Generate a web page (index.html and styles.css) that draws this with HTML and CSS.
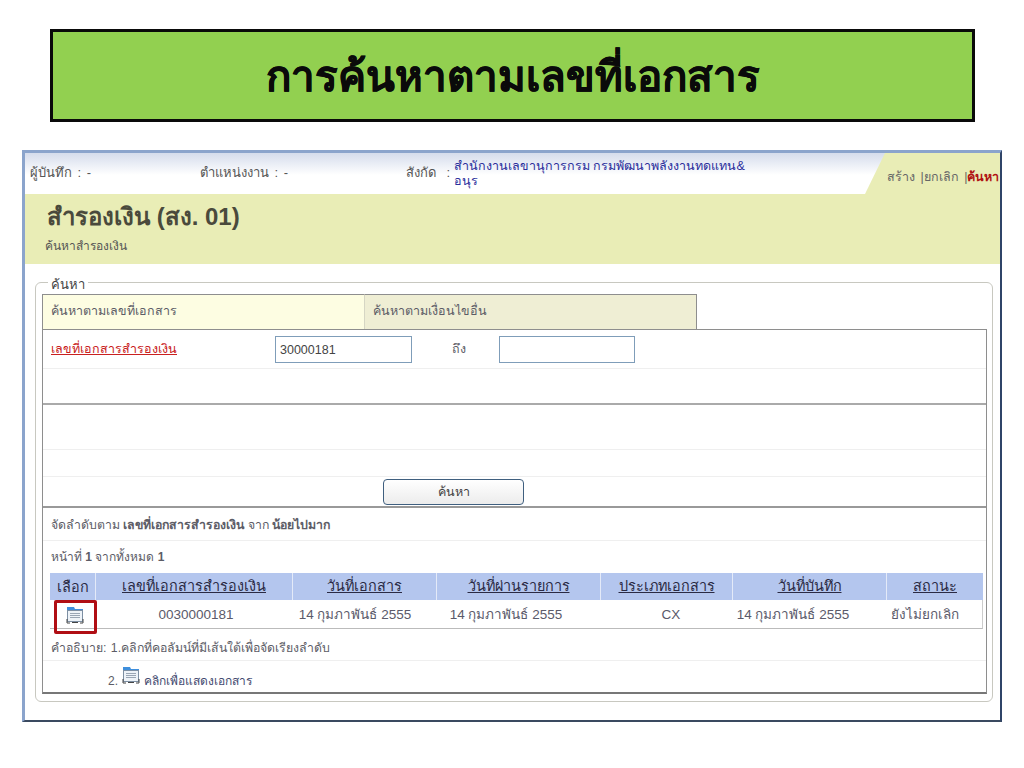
FILE: index.html
```html
<!DOCTYPE html>
<html lang="th">
<head>
<meta charset="utf-8">
<title>การค้นหาตามเลขที่เอกสาร</title>
<link rel="stylesheet" href="styles.css">
</head>
<body>
<h1 class="banner">การค้นหาตามเลขที่เอกสาร</h1>
<div class="app">
  <div class="topbar">
    <div class="meta m1">ผู้บันทึก : -</div>
    <div class="meta m2">ตำแหน่งงาน : -</div>
    <div class="meta m3">สังกัด :</div>
    <div class="org">สำนักงานเลขานุการกรม กรมพัฒนาพลังงานทดแทน&amp;<br>อนุร</div>
    <div class="actions"><span>สร้าง</span> |<span>ยกเลิก</span> |<b>ค้นหา</b></div>
  </div>
  <div class="titleblock">
    <div class="apptitle">สำรองเงิน (สง. 01)</div>
    <div class="subtitle">ค้นหาสำรองเงิน</div>
  </div>
  <div class="fieldset">
    <div class="legend">ค้นหา</div>
    <div class="tabs">
      <div class="tab active">ค้นหาตามเลขที่เอกสาร</div>
      <div class="tab">ค้นหาตามเงื่อนไขอื่น</div>
    </div>
    <div class="panel">
      <div class="row r-form">
        <a class="reqlink">เลขที่เอกสารสำรองเงิน</a>
        <div class="input first">30000181</div>
        <span class="to">ถึง</span>
        <div class="input second"></div>
      </div>
      <div class="row r-blank"></div>
      <div class="row r-blank2"></div>
      <div class="row r-blank3"></div>
      <div class="row r-btn"><div class="btn">ค้นหา</div></div>
      <div class="row r-sort">จัดลำดับตาม <b>เลขที่เอกสารสำรองเงิน</b> จาก <b>น้อยไปมาก</b></div>
      <div class="row r-page">หน้าที่ <b>1</b> จากทั้งหมด <b>1</b></div>
      <div class="tablewrap">
        <div class="grid head">
          <div class="c-sel">เลือก</div>
          <div><u>เลขที่เอกสารสำรองเงิน</u></div>
          <div><u>วันที่เอกสาร</u></div>
          <div><u>วันที่ผ่านรายการ</u></div>
          <div><u>ประเภทเอกสาร</u></div>
          <div><u>วันที่บันทึก</u></div>
          <div><u>สถานะ</u></div>
        </div>
        <div class="grid body">
          <div class="c-sel"><svg class="docicon" viewBox="0 0 18 18"><path d="M1 4V1h7l1 2h8v2H1z" fill="#3f8fdc"/><rect x="1.500" y="4.500" width="15" height="11" fill="#eef3f8" stroke="#7d8fa3"/><path d="M4 7.500h10M4 9.500h10M4 11.500h10" stroke="#9aa6b4"/><path d="M1 13v4h3M17 13v4h-3M6 16.500h6" fill="none" stroke="#444"/></svg></div>
          <div class="num">0030000181</div>
          <div class="d1">14 กุมภาพันธ์ 2555</div>
          <div class="d2">14 กุมภาพันธ์ 2555</div>
          <div class="cx">CX</div>
          <div class="d3">14 กุมภาพันธ์ 2555</div>
          <div class="d1">ยังไม่ยกเลิก</div>
          <div class="redbox"></div>
        </div>
      </div>
      <div class="row r-note1"><span class="notelabel">คำอธิบาย:</span> 1.คลิกที่คอลัมน์ที่มีเส้นใต้เพื่อจัดเรียงลำดับ</div>
      <div class="row r-note2"><span class="noteitem">2.</span><svg class="docicon" viewBox="0 0 18 18"><path d="M1 4V1h7l1 2h8v2H1z" fill="#3f8fdc"/><rect x="1.500" y="4.500" width="15" height="11" fill="#eef3f8" stroke="#7d8fa3"/><path d="M4 7.500h10M4 9.500h10M4 11.500h10" stroke="#9aa6b4"/><path d="M1 13v4h3M17 13v4h-3M6 16.500h6" fill="none" stroke="#444"/></svg><span class="noteitem notelink">คลิกเพื่อแสดงเอกสาร</span></div>
    </div>
  </div>
</div>
</body>
</html>
```
FILE: styles.css
```css
* { box-sizing: border-box; }
html, body { margin: 0; padding: 0; }
body {
  width: 1024px;
  height: 768px;
  overflow: hidden;
  background: #fff;
  padding: 29px 0 0 22px;
  font-family: "Liberation Sans", "Noto Sans", "DejaVu Sans", sans-serif;
  font-size: 12.500px;
  color: #5c5c66;
}
.banner {
  width: 925px;
  height: 93px;
  margin: 0 0 28px 28px;
  padding-top: 3px;
  background: #92d050;
  border: 3px solid #0a0a0a;
  display: flex;
  align-items: center;
  justify-content: center;
  font-size: 42px;
  font-weight: 700;
  color: #0a0a0a;
  line-height: 1;
  -webkit-text-stroke: 0.4px #0a0a0a;
}
.app {
  width: 980px;
  height: 572px;
  border-left: 3px solid #8ba4cc;
  border-top: 3px solid #8ba4cc;
  border-right: 2px solid #2f4468;
  border-bottom: 2px solid #3a4a60;
  background: #fff;
}
.topbar {
  height: 41px;
  position: relative;
  display: flex;
  background: linear-gradient(#d5dcec, #fff 22px);
  color: #555;
  line-height: 14px;
  white-space: nowrap;
}
.meta { padding-top: 13px; font-size: 13px; word-spacing: 2px; }
.m1 { width: 175px; padding-left: 5px; }
.m2 { width: 190px; }
.m3 { width: 60px; text-align: right; word-spacing: 7px; }
.org { color: #2b2f9c; font-weight: 500; padding: 6px 0 0 4px; width: 410px; line-height: 15px; }
.actions {
  position: absolute;
  right: 0;
  top: 0;
  width: 135px;
  height: 41px;
  padding: 17px 0 0 22px;
  background: #e9edb6;
  clip-path: polygon(20px 0, 100% 0, 100% 100%, 0 100%);
  color: #666;
}
.actions b { color: #b01212; }
.actions span { margin-right: 2px; }
.titleblock {
  height: 70px;
  background: #e9edb6;
  padding: 6px 0 0 22px;
}
.apptitle { font-size: 24px; font-weight: 700; color: #4a4a3c; line-height: 34px; }
.subtitle { font-size: 12px; color: #555; line-height: 16px; margin: 4px 0 0 -2px; }
.fieldset {
  width: 958px;
  height: 420px;
  margin: 18px 0 0 10px;
  border: 1px solid #c8c8c0;
  border-radius: 6px;
  padding: 11px 5px 0 6px;
  position: relative;
}
.legend {
  position: absolute;
  left: 12px;
  top: -6px;
  background: #fff;
  padding: 0 3px;
  font-size: 13px;
  line-height: 15px;
  color: #444;
}
.tabs { display: flex; height: 35px; }
.tab {
  height: 35px;
  border: 1px solid #8e8e8e;
  border-bottom: 0;
  background: #efeed4;
  padding: 8px 8px 0;
  line-height: 16px;
}
.tab.active { width: 322px; background: #fdfde2; border-right: 0; }
.tab:not(.active) { width: 333px; border-left: 1px solid #d6d6c4; }
.panel {
  width: 945px;
  height: 365px;
  border: 1px solid #8e8e8e;
  border-bottom: 2px solid #777;
}
.row { border-bottom: 1px solid #efefef; padding-left: 8px; line-height: 16px; }
.r-form { height: 39px; display: flex; align-items: center; }
.reqlink { color: #c92020; text-decoration: underline; font-weight: 500; width: 224px; }
.input {
  height: 27px;
  border: 1px solid #7f9db9;
  background: #fff;
  padding: 5px 4px;
  color: #444;
}
.input.first { width: 137px; }
.to { margin-left: 40px; width: 47px; }
.input.second { width: 136px; }
.r-blank { height: 36px; border-bottom: 2px solid #aaa; }
.r-blank2 { height: 45px; }
.r-blank3 { height: 27px; }
.r-btn { height: 31px; border-bottom: 2px solid #999; padding: 2px 0 0 340px; }
.btn {
  width: 141px;
  height: 26px;
  border: 1px solid #3f5f7f;
  border-radius: 4px;
  background: linear-gradient(#fff, #ececec);
  text-align: center;
  line-height: 24px;
  color: #444;
}
.r-sort { height: 33px; padding-top: 9px; font-size: 12.300px; }
.r-page { height: 32px; padding-top: 8px; border-bottom: 0; font-size: 12px; }
.tablewrap { margin: 0 3px 0 7px; }
.grid {
  display: grid;
  grid-template-columns: 46px 197px 144px 164px 132px 154px 1fr;
  text-align: center;
  position: relative;
}
.head { height: 27px; background: #b4c6ee; color: #2a2a44; font-size: 14.400px; font-weight: 500; line-height: 26px; }
.head > div { border-right: 1px solid #e4eaf8; }
.head > div:last-child { border-right: 0; }
.body { height: 29px; font-size: 13.500px; line-height: 30px; border-bottom: 1px solid #bbb; border-right: 1px solid #ccc; color: #5a5a6a; }
.num { padding-left: 3px; }
.d1 { padding-right: 20px; }
.d2 { padding-right: 26px; }
.d3 { padding-right: 34px; }
.cx { padding-left: 8px; }
.c-sel { display: flex; justify-content: center; align-items: center; padding-left: 3px; }
.head .c-sel { padding-left: 0; }
.docicon { width: 18px; height: 18px; display: block; }
.redbox {
  position: absolute;
  left: 4px;
  top: 0;
  width: 43px;
  height: 34px;
  border: 3px solid #b00e14;
  border-radius: 2px;
}
.r-note1 { height: 32px; padding-top: 11px; font-size: 12.300px; }
.notelabel { margin-right: 1px; }
.r-note2 { height: 31px; padding: 5px 0 0 65px; border-bottom: 0; font-size: 12px; display: flex; align-items: flex-start; gap: 4px; }
.noteitem { margin-top: 7px; }
.notelink { color: #444a70; }
```
